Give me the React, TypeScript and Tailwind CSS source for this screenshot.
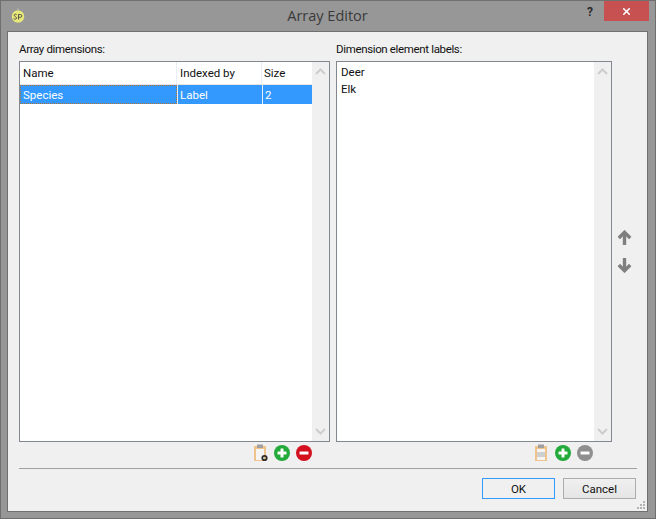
import { X } from 'lucide-react'

const uiFont = 'font-["Roboto",sans-serif]'

function Chevron({ down }: { down?: boolean }) {
  return (
    <svg width="11" height="7" viewBox="0 0 11 7" fill="none" stroke="#cdcdcd" strokeWidth="2">
      <path d={down ? 'M1 1l4.5 4.5L10 1' : 'M1 6l4.5-4.5L10 6'} />
    </svg>
  )
}

function ScrollBar() {
  return (
    <div className="w-[17px] shrink-0 bg-[#f0f0f0] flex flex-col items-center justify-between py-[6px]">
      <Chevron />
      <Chevron down />
    </div>
  )
}

function Clipboard({ gear }: { gear?: boolean }) {
  return (
    <svg width="16" height="18" viewBox="0 0 16 18">
      <rect x="2" y="2" width="12" height="15" fill="#efc48c" />
      <rect x="4" y="5" width="8" height="11" fill="#f4f4f4" />
      {!gear && <rect x="4" y="8" width="8" height="5" fill="#cfcfcf" />}
      <rect x="5" y="0.5" width="6" height="3.5" fill="#a0a0a0" />
      {gear && <circle cx="12.5" cy="14" r="2.2" fill="none" stroke="#2d2d2d" strokeWidth="1.8" />}
    </svg>
  )
}

function RoundIcon({ color, plus }: { color: string; plus?: boolean }) {
  return (
    <svg width="16" height="16" viewBox="0 0 16 16">
      <circle cx="8" cy="8" r="8" fill={color} />
      <rect x="3.5" y="6.5" width="9" height="3" rx="0.5" fill="#fff" />
      {plus && <rect x="6.5" y="3.5" width="3" height="9" rx="0.5" fill="#fff" />}
    </svg>
  )
}

function Arrow({ down }: { down?: boolean }) {
  return (
    <svg width="15" height="16" viewBox="0 0 15 16" fill="none" stroke="#7f7f7f" strokeWidth="3.4">
      <g transform={down ? 'rotate(180 7.5 8)' : undefined}>
        <path d="M7.5 15V2.5" />
        <path d="M1.8 8l5.7-5.7L13.2 8" />
      </g>
    </svg>
  )
}

export default function App() {
  return (
    <div className={`${uiFont} w-[656px] h-[519px] bg-[#979797] border border-[#6f6f6f] flex flex-col overflow-hidden text-[11.5px] text-[#111111]`}>
      {/* title bar */}
      <div className="h-[30px] shrink-0 flex items-start pl-[10px]">
        <svg className="mt-[7px]" width="14" height="15" viewBox="0 0 14 15">
          <circle cx="7" cy="8.5" r="6.2" fill="#e8e87a" />
          <circle cx="7" cy="1.2" r="1" fill="#b0b0a0" />
          <path d="M2.6 10.6c1.2 1.1 3 .6 3-.6S3 8.4 3.2 7.2s2-1.2 2.5-.6M7.5 11.5V6.5h2c1.8 0 1.8 2.8 0 2.8h-2" fill="none" stroke="#444" strokeWidth="0.9" />
        </svg>
        <div className="flex-1 text-center text-[#3a3a3a] text-[14.5px] leading-[20px] mt-[5px] pl-[43px] font-['Open_Sans',sans-serif]">Array Editor</div>
        <div className="w-[12px] text-[#2b2b2b] font-bold text-[12px] leading-[14px] mt-[4px] mr-[5px]">?</div>
        <div className="w-[45px] h-[20px] mr-[6px] bg-[#c75050] flex items-center justify-center">
          <X size={11} strokeWidth={3.5} color="#fff" />
        </div>
      </div>

      {/* client area */}
      <div className="mx-[6px] w-[641px] h-[481px] shrink-0 bg-[#f0f0f0] border border-[#6f6f6f] relative flex flex-col pt-[8px] pl-[11px] pr-[11px]">
        <div className="flex gap-[6px] h-[423px]">
          <div className="w-[311px] flex flex-col">
            <div className="h-[21px] leading-[18px] tracking-[-0.35px]">Array dimensions:</div>
            <div className="flex-1 border border-[#828790] bg-white flex">
              <div className="flex-1">
                <div className="h-[23px] flex border-b border-[#e5e5e5] leading-[22px]">
                  <div className="w-[157px] pl-[3px] border-r border-[#e8eef5]">Name</div>
                  <div className="w-[85px] pl-[3px] border-r border-[#e8eef5]">Indexed by</div>
                  <div className="pl-[2px]">Size</div>
                </div>
                <div className="h-[19px] flex bg-[#3399ff] text-white leading-[20px]">
                  <div className="w-[157px] pl-[2px] border border-dotted border-[#b5722e] leading-[18px]">Species</div>
                  <div className="w-[85px] pl-[2px] border-l border-[#e8eef5]">Label</div>
                  <div className="pl-[2px] border-l border-[#e8eef5]">2</div>
                </div>
              </div>
              <ScrollBar />
            </div>
            <div className="h-[21px] flex items-center justify-end gap-[6px] pr-[18px]">
              <Clipboard gear />
              <RoundIcon color="#22aa3a" plus />
              <RoundIcon color="#d5101e" />
            </div>
          </div>

          <div className="w-[276px] flex flex-col">
            <div className="h-[21px] leading-[18px] tracking-[-0.35px]">Dimension element labels:</div>
            <div className="flex-1 border border-[#828790] bg-white flex">
              <div className="flex-1 pl-[4px] pt-[2px] leading-[17px]">
                <div>Deer</div>
                <div>Elk</div>
              </div>
              <ScrollBar />
            </div>
            <div className="h-[21px] flex items-center justify-end gap-[6px] pr-[19px]">
              <Clipboard />
              <RoundIcon color="#22aa3a" plus />
              <RoundIcon color="#8f8f8f" />
            </div>
          </div>

          <div className="flex flex-col gap-[11px] pt-[190px] -ml-[1px]">
            <Arrow />
            <Arrow down />
          </div>
        </div>

        <div className="h-px bg-[#a0a0a0] mt-[5px] w-[618px]" />

        <div className="flex justify-end gap-[8px] mt-[9px] w-[617px]">
          <button className="w-[73px] h-[21px] border border-[#3399ff] bg-[#f0f0f0] leading-[18px]">OK</button>
          <button className="w-[73px] h-[21px] border border-[#acacac] bg-gradient-to-b from-[#f0f0f0] to-[#e5e5e5] leading-[18px]">Cancel</button>
        </div>

        {/* resize grip */}
        <svg className="absolute right-[1px] bottom-[1px]" width="9" height="9" viewBox="0 0 9 9" fill="#b5b5b5">
          <rect x="6" y="0" width="2" height="2" />
          <rect x="3" y="3" width="2" height="2" />
          <rect x="6" y="3" width="2" height="2" />
          <rect x="0" y="6" width="2" height="2" />
          <rect x="3" y="6" width="2" height="2" />
          <rect x="6" y="6" width="2" height="2" />
        </svg>
      </div>
    </div>
  )
}
